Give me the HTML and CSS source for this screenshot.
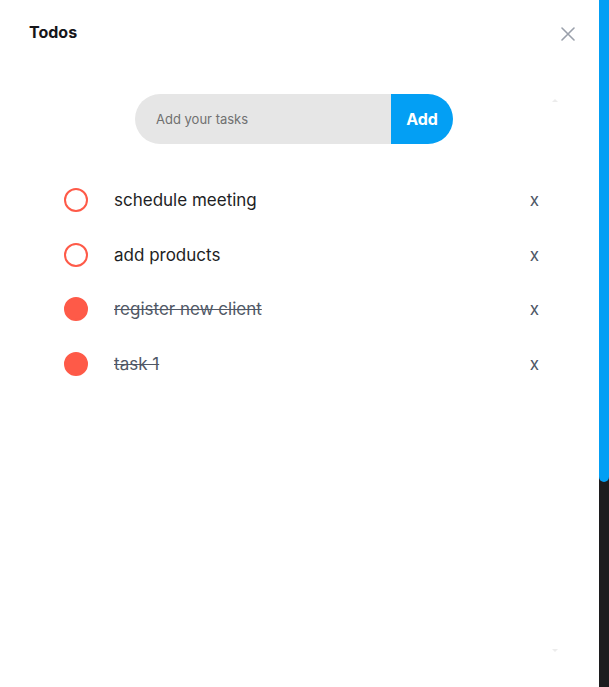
FILE: index.html
```html
<!DOCTYPE html>
<html>
<head>
<meta charset="utf-8">
<link rel="stylesheet" href="styles.css">
</head>
<body>
<div class="app">
  <div class="panel">
    <div class="header">
      <h1 class="title">Todos</h1>
      <svg class="close" width="14" height="14" viewBox="0 0 14 14"><path d="M1 1L13 13M13 1L1 13" stroke="#9aa0ab" stroke-width="1.6" stroke-linecap="round"/></svg>
    </div>
    <div class="form-row">
      <div class="form">
        <input class="field" type="text" placeholder="Add your tasks">
        <button class="add">Add</button>
      </div>
      <span class="arrow up"></span>
    </div>
    <ul class="list">
      <li class="item"><span class="check"></span><span class="text">schedule meeting</span><span class="del">x</span></li>
      <li class="item"><span class="check"></span><span class="text">add products</span><span class="del">x</span></li>
      <li class="item done"><span class="check"></span><span class="text">register new client</span><span class="del">x</span></li>
      <li class="item done"><span class="check"></span><span class="text">task 1</span><span class="del">x</span></li>
    </ul>
    <span class="arrow down"></span>
  </div>
  <div class="scrollbar"><div class="thumb"></div></div>
</div>
</body>
</html>
```
FILE: styles.css
```css
* { box-sizing: border-box; }
html, body { margin: 0; padding: 0; }
body { font-family: Inter, "Noto Sans", sans-serif; background: #1c1c1e; }
.app { display: flex; width: 609px; height: 687px; overflow: hidden; }
.panel { position: relative; width: 599px; height: 687px; background: #fff; }
.scrollbar { width: 10px; height: 687px; background: #1c1c1e; }
.thumb { height: 482px; background: #039ff4; border-radius: 0 0 5px 5px; }
.header { display: flex; align-items: center; justify-content: space-between; padding: 22px 24px 0 29px; height: 42px; }
.title { margin: 0; font-size: 16px; line-height: 20px; font-weight: 700; color: #16161a; }
.close { margin-top: 4px; }
.form-row { position: relative; margin-top: 52px; padding-left: 135px; }
.form { display: flex; width: 318px; height: 50px; }
.field { flex: 1; min-width: 0; border: 0; outline: 0; background: #e6e6e6; border-radius: 25px 0 0 25px; padding: 0 0 0 21px; font-family: Inter, sans-serif; font-size: 13px; color: #333; }
.field::placeholder { color: #707070; }
.add { width: 62px; border: 0; background: #039ff4; color: #fff; font-family: Inter, sans-serif; font-weight: 700; font-size: 16px; border-radius: 0 25px 25px 0; padding: 0; }
.arrow { position: absolute; left: 552px; width: 0; height: 0; border-left: 3px solid transparent; border-right: 3px solid transparent; }
.arrow.up { top: 5px; border-bottom: 3px solid #ececec; }
.arrow.down { top: 649px; border-top: 3px solid #ececec; }
.list { list-style: none; margin: 29px 0 0 0; padding: 0 0 0 64px; }
.item { display: flex; align-items: center; height: 54.6px; width: 480px; }
.check { width: 24px; height: 24px; border-radius: 50%; border: 2px solid #fe5a48; flex: none; }
.text { margin-left: 26px; font-size: 17px; color: #1e1e24; flex: 1; }
.del { font-size: 17px; color: #4d5566; margin-right: 5px; }
.done .check { background: #fe5a48; }
.done .text { text-decoration: line-through; color: #505866; }
```
